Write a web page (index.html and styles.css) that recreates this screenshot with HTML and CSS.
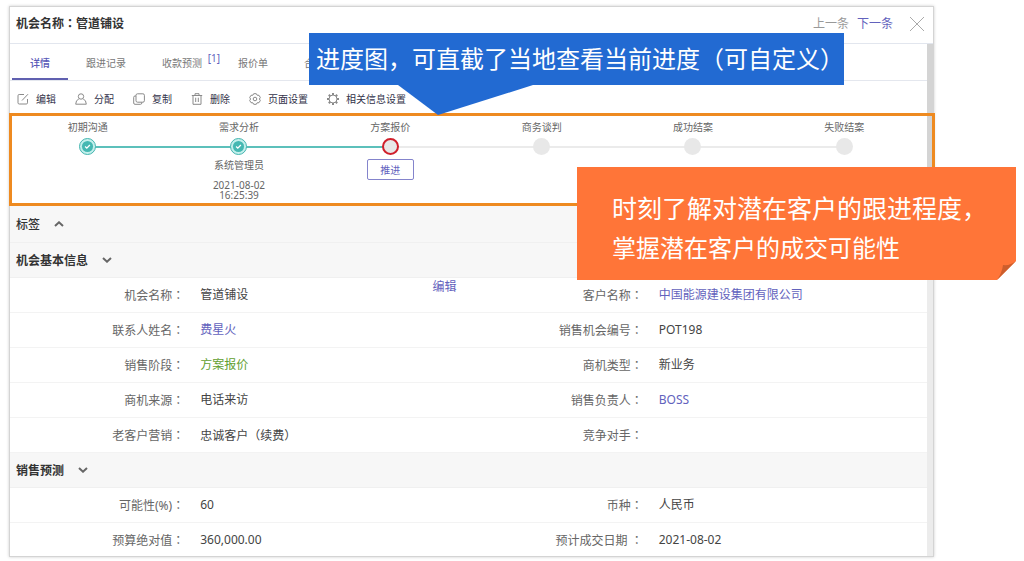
FILE: index.html
```html
<!DOCTYPE html>
<html lang="zh-CN">
<head>
<meta charset="utf-8">
<title>机会名称：管道铺设</title>
<link rel="stylesheet" href="styles.css">
</head>
<body>
<main class="stage">
  <section class="panel">
    <header class="panel-head">
      <h1 class="panel-title">机会名称<span class="colon">：</span>管道铺设</h1>
      <nav class="pager">
        <a class="pager-link is-muted" href="#prev">上一条</a>
        <a class="pager-link" href="#next">下一条</a>
        <button class="close" type="button" aria-label="关闭">
          <svg width="16" height="16" viewBox="0 0 16 16"><path d="M1 1L15 15M15 1L1 15"/></svg>
        </button>
      </nav>
    </header>

    <div class="panel-body">
      <div class="content">
        <nav class="tabs">
          <a class="tab is-active" href="#detail">详情</a>
          <a class="tab" href="#follow">跟进记录</a>
          <a class="tab" href="#forecast">收款预测<span class="badge">[1]</span></a>
          <a class="tab" href="#quote">报价单</a>
          <a class="tab" href="#contract">合同</a>
        </nav>

        <div class="toolbar">
          <button class="tool" type="button">
            <svg class="icon" viewBox="0 0 12 12"><path d="M7 1.5H2.2Q1 1.500 1 2.700V9.800Q1 11 2.200 11H9.300Q10.500 11 10.500 9.800V6M5 7.500L11 1.200"/></svg>编辑</button>
          <button class="tool" type="button">
            <svg class="icon" viewBox="0 0 12 12"><circle cx="6" cy="3.500" r="2.700"/><path d="M3.800 6Q.8 7 .7 11.200H11.300Q11.200 7 8.200 6"/></svg>分配</button>
          <button class="tool" type="button">
            <svg class="icon" viewBox="0 0 12 12"><rect x="3" y=".8" width="8.400" height="8.400" rx="1.500"/><path d="M3 3H2Q.7 3 .7 4.300V10Q.7 11.300 2 11.300H7.500Q8.800 11.300 8.800 10V9.300"/></svg>复制</button>
          <button class="tool" type="button">
            <svg class="icon" viewBox="0 0 12 12"><path d="M.8 2.500H11.200M4 2.500V.7H8V2.500M2 2.500V11.300H10V2.500M4.700 4.700V9M7.300 4.700V9"/></svg>删除</button>
          <button class="tool" type="button">
            <svg class="icon" viewBox="0 0 12 12"><path d="M4.700 .7H7.300L8.100 2.200L10 2.300L11.300 4.500L10.400 6L11.300 7.500L10 9.700L8.100 9.800L7.300 11.300H4.700L3.900 9.800L2 9.700L.7 7.500L1.600 6L.7 4.500L2 2.300L3.900 2.200Z"/><circle cx="6" cy="6" r="1.800"/></svg>页面设置</button>
          <button class="tool" type="button">
            <svg class="icon" viewBox="0 0 12 12"><circle cx="6" cy="6" r="4"/><path class="cogs" d="M6 0V2M6 10V12M0 6H2M10 6H12M1.800 1.800L3.200 3.200M8.800 8.800L10.200 10.200M10.200 1.800L8.800 3.200M3.200 8.800L1.800 10.200"/></svg>相关信息设置</button>
        </div>

        <ol class="progress">
          <li class="step is-done">
            <span class="step-name">初期沟通</span>
            <span class="dot"><svg viewBox="0 0 17 17"><circle cx="8.500" cy="8.500" r="6.300"/><path d="M5.800 8.600L7.700 10.400L11.200 6.900"/></svg></span>
          </li>
          <li class="step is-done">
            <span class="step-name">需求分析</span>
            <span class="dot"><svg viewBox="0 0 17 17"><circle cx="8.500" cy="8.500" r="6.300"/><path d="M5.800 8.600L7.700 10.400L11.200 6.900"/></svg></span>
            <span class="step-owner">系统管理员</span>
            <time class="step-time">2021-08-02<br>16:25:39</time>
          </li>
          <li class="step is-current">
            <span class="step-name">方案报价</span>
            <span class="dot"></span>
            <button class="advance" type="button">推进</button>
          </li>
          <li class="step"><span class="step-name">商务谈判</span><span class="dot"></span></li>
          <li class="step"><span class="step-name">成功结案</span><span class="dot"></span></li>
          <li class="step"><span class="step-name">失败结案</span><span class="dot"></span></li>
        </ol>

        <h2 class="section"><button class="section-toggle is-light" type="button">标签
          <svg class="chevron" viewBox="0 0 10 6"><path d="M1 5L5 1.300L9 5"/></svg></button></h2>
        <h2 class="section"><button class="section-toggle" type="button">机会基本信息
          <svg class="chevron" viewBox="0 0 10 6"><path d="M1 1L5 4.700L9 1"/></svg></button></h2>

        <dl class="fields">
          <dt>机会名称<span class="colon">：</span></dt>
          <dd class="with-edit">管道铺设<a class="edit" href="#edit">编辑</a></dd>
          <dt>客户名称<span class="colon">：</span></dt>
          <dd><a href="#customer">中国能源建设集团有限公司</a></dd>
          <dt>联系人姓名<span class="colon">：</span></dt>
          <dd><a href="#contact">费星火</a></dd>
          <dt>销售机会编号<span class="colon">：</span></dt>
          <dd>POT198</dd>
          <dt>销售阶段<span class="colon">：</span></dt>
          <dd class="stage-value">方案报价</dd>
          <dt>商机类型<span class="colon">：</span></dt>
          <dd>新业务</dd>
          <dt>商机来源<span class="colon">：</span></dt>
          <dd>电话来访</dd>
          <dt>销售负责人<span class="colon">：</span></dt>
          <dd><a href="#owner">BOSS</a></dd>
          <dt>老客户营销<span class="colon">：</span></dt>
          <dd>忠诚客户<span class="colon">（</span>续费<span class="colon">）</span></dd>
          <dt>竞争对手<span class="colon">：</span></dt>
          <dd></dd>
        </dl>

        <h2 class="section"><button class="section-toggle" type="button">销售预测
          <svg class="chevron" viewBox="0 0 10 6"><path d="M1 1L5 4.700L9 1"/></svg></button></h2>

        <dl class="fields is-last">
          <dt>可能性(%)<span class="colon">：</span></dt>
          <dd>60</dd>
          <dt>币种<span class="colon">：</span></dt>
          <dd>人民币</dd>
          <dt>预算绝对值<span class="colon">：</span></dt>
          <dd>360,000.00</dd>
          <dt>预计成交日期&nbsp;<span class="colon">：</span></dt>
          <dd>2021-08-02</dd>
        </dl>
      </div>
      <div class="scrollbar"><div class="thumb"></div></div>
    </div>
  </section>

  <aside class="callout callout-blue">
    进度图，可直截了当地查看当前进度（可自定义）
    <svg class="pointer" width="135" height="30" viewBox="0 0 135 30"><path d="M0 0H135L40 30Z"/></svg>
  </aside>

  <aside class="callout callout-orange">
    <p class="line-one">时刻了解对潜在客户的跟进程度，</p>
    <p class="line-two">掌握潜在客户的成交可能性</p>
    <svg class="fold" width="19" height="19" viewBox="0 0 19 19"><path class="fold-back" d="M19 0V19H0Z"/><path class="fold-flap" d="M0 19Q5 12 6 4Q13 5 19 0Z"/></svg>
  </aside>
</main>
</body>
</html>
```

FILE: styles.css
```css
* {
  box-sizing: border-box;
}

body {
  margin: 0;
  background: #fff;
  color: #444;
  font-family: "Noto Sans", "Noto Sans CJK SC", sans-serif;
  font-size: 12px;
}

h1, h2, p, dl, dd, ol {
  margin: 0;
  padding: 0;
}

ol {
  list-style: none;
}

a {
  color: #6262bd;
  text-decoration: none;
}

button {
  padding: 0;
  border: 0;
  background: none;
  color: inherit;
  font: inherit;
}

svg {
  display: block;
  fill: none;
}

/* Centred full-width punctuation */
.colon {
  font-family: "Noto Sans CJK TC", sans-serif;
  font-feature-settings: "locl" 0;
}

.stage {
  position: relative;
  padding: 6px 90px 5px 9px;
}

.panel {
  border: 1px solid #d4d4d4;
  box-shadow: 0 0 3px #ccc;
  background: #fff;
}

.panel-head {
  display: flex;
  align-items: center;
  justify-content: space-between;
  height: 37px;
  padding: 0 8px 3px 6px;
  border-bottom: 1px solid #e2e6ee;
}

.panel-title {
  color: #333;
  font-size: 12px;
  line-height: 18px;
}

.pager {
  display: flex;
  align-items: center;
  gap: 8px;
  line-height: 18px;
}

.is-muted {
  color: #999;
}

.close {
  margin-left: 8px;
}

.close svg {
  stroke: #aaa;
}

.panel-body {
  display: flex;
}

.content {
  flex: 1;
  min-width: 0;
}

.scrollbar {
  width: 6px;
  background: #ececec;
}

.thumb {
  height: 152px;
  background: #d4d4d4;
}

.tabs {
  display: flex;
  height: 37px;
  padding-left: 2px;
  border-bottom: 1px solid #e4e7ee;
}

.tab {
  position: relative;
  padding: 0 18px;
  color: #777;
  font-size: 10px;
  line-height: 38px;
}

.tab.is-active {
  border-bottom: 2px solid #6060b0;
  color: #5a5ab8;
  font-weight: 500;
}

.badge {
  position: absolute;
  top: 8px;
  right: 0;
  color: #6262bd;
  line-height: 12px;
}

.toolbar {
  display: flex;
  gap: 19px;
  height: 32px;
  padding: 3px 7px 0;
}

.tool {
  display: flex;
  align-items: center;
  gap: 7px;
  color: #33334a;
  font-size: 10px;
  white-space: nowrap;
}

.icon {
  width: 12px;
  height: 12px;
  overflow: visible;
  stroke: #8a8a8a;
}

.cogs {
  stroke-width: 2;
}

.progress {
  position: relative;
  display: flex;
  height: 93px;
  margin: 0 -8px 0 -1px;
  padding: 3px 12px 0 0;
  border: 3px solid #ee8a20;
}

.step {
  position: relative;
  display: flex;
  flex: 1;
  flex-direction: column;
  align-items: center;
  color: #666;
  font-size: 10px;
  line-height: 16px;
}

.step::before {
  content: "";
  position: absolute;
  top: 27px;
  right: 50%;
  width: 100%;
  height: 2px;
  background: #ebebeb;
}

.step:first-child::before {
  display: none;
}

.step.is-done::before,
.step.is-current::before {
  background: #5cc0bb;
}

.dot {
  position: relative;
  z-index: 1;
  width: 17px;
  height: 17px;
  margin-top: 3px;
  border-radius: 50%;
  background: #e8e8e8;
}

.is-done .dot {
  border: 1px solid #45b5b0;
  background: #c4f0ec;
}

.is-done circle {
  fill: #45b8b2;
}

.is-done path {
  stroke: #fff;
  stroke-width: 1.5;
}

.is-current .dot {
  border: 2px solid #d0202c;
}

.step-owner {
  margin-top: 2px;
}

.step-time {
  margin-top: 7px;
  line-height: 10px;
  text-align: center;
}

.advance {
  width: 47px;
  height: 21px;
  margin-top: 4px;
  border: 1px solid #8484cc;
  border-radius: 2px;
  color: #6262bd;
}

.section {
  border-bottom: 1px solid #f0f0f0;
  background: #f7f7f7;
  font-size: 12px;
}

.section-toggle {
  display: flex;
  align-items: center;
  gap: 14px;
  width: 100%;
  height: 34px;
  padding: 0 6px;
  color: #333;
  font-weight: 700;
}

.section-toggle.is-light {
  height: 36px;
  font-weight: 500;
}

.chevron {
  width: 10px;
  height: 6px;
  stroke: #666;
  stroke-width: 2;
}

.fields {
  display: grid;
  grid-template-columns: 19% 31% 19% 31%;
}

.fields dt,
.fields dd {
  height: 35px;
  border-bottom: 1px solid #f3f3f3;
  line-height: 34px;
  white-space: nowrap;
}

.fields.is-last {
  grid-template-rows: 35px 33px;
}

.fields dt {
  color: #666;
  text-align: right;
}

.fields dd {
  padding-left: 16px;
}

.fields.is-last dt:nth-last-of-type(-n + 2),
.fields.is-last dd:nth-last-of-type(-n + 2) {
  height: 33px;
  border-bottom: 0;
}

.with-edit {
  display: flex;
  justify-content: space-between;
}

.edit {
  padding-right: 12px;
  line-height: 18px;
}

.stage-value {
  color: #62a030;
}

.callout {
  position: absolute;
  color: #fff;
  white-space: nowrap;
}

.callout-blue {
  top: 33px;
  left: 309px;
  padding: 0 0 0 7px;
  background: #226ad2;
  font-size: 24px;
  line-height: 52px;
  height: 52px;
  width: 535px;
}

.pointer {
  position: absolute;
  top: 100%;
  left: 89px;
  fill: #226ad2;
}

.callout-orange {
  top: 167px;
  right: 8px;
  width: 439px;
  padding: 22px 0 13px 35px;
  background: #ff7538;
  line-height: 39px;
}

.line-one {
  font-size: 25px;
}

.line-two {
  font-size: 24px;
}

.fold {
  position: absolute;
  right: 0;
  bottom: 0;
}

.fold-back {
  fill: #fff;
}

.fold-flap {
  fill: #cc5e2d;
}
```
